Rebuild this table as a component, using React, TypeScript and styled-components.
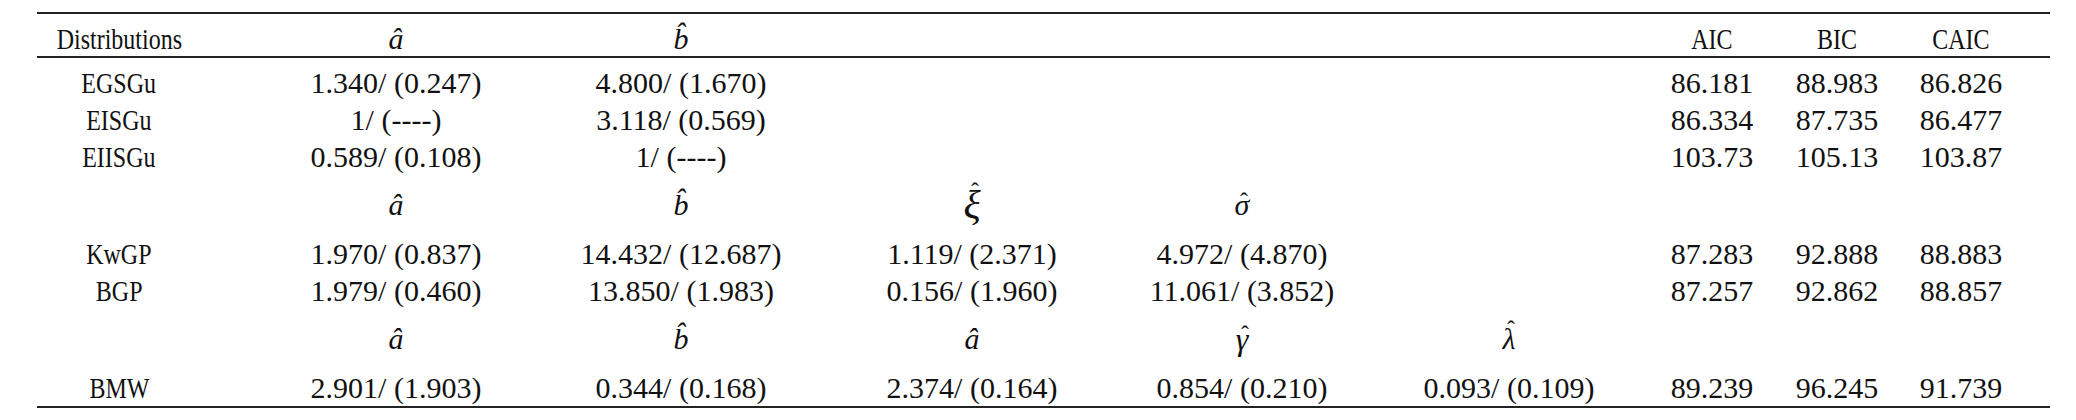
import React from "react";
import styled, { createGlobalStyle } from "styled-components";

const Global = createGlobalStyle`
  html, body { margin: 0; padding: 0; background: #ffffff; }
  body { font-family: "Liberation Serif", "Times New Roman", serif; color: #111111; }
`;

const COLS = "164px 390px 180px 402px 138px 396px 10px 240px 8px";

const Page = styled.div`
  box-sizing: border-box;
  width: 2076px;
  padding: 12px 26px 0 37px;
`;

const Table = styled.div`
  border-top: 2px solid #222222;
  border-bottom: 2px solid #222222;
`;

const Row = styled.div<{ $h: number; $padTop?: number; $rule?: boolean }>`
  display: grid;
  grid-template-columns: ${COLS};
  box-sizing: border-box;
  height: ${(p) => p.$h}px;
  padding-top: ${(p) => p.$padTop ?? 0}px;
  align-items: center;
  border-bottom: ${(p) => (p.$rule ? "2px solid #222222" : "none")};
`;

const Cell = styled.div`
  display: flex;
  justify-content: center;
  white-space: nowrap;
  line-height: 1;
`;

const Label = styled.span`
  display: inline-block;
  font-size: 30px;
  transform: scaleX(0.8);
`;

const Num = styled.span`
  font-size: 30px;
`;

const Sym = styled.span<{ $size?: number }>`
  font-style: italic;
  font-size: ${(p) => p.$size ?? 30}px;
`;

/* Greek letters: the circumflex is drawn over the glyph as a decoration */
const GreekHat = styled.span<{ $size: number; $top: number; $dx: number }>`
  position: relative;
  display: inline-block;
  font-style: italic;
  font-size: ${(p) => p.$size}px;
  line-height: 1;
  &::after {
    content: "ˆ";
    position: absolute;
    left: 50%;
    top: ${(p) => p.$top}px;
    transform: translateX(calc(-50% + ${(p) => p.$dx}px));
    font-style: normal;
    font-size: 24px;
    line-height: 1;
  }
`;

type Val =
  | { kind: "label" | "num"; text: string }
  | { kind: "sym"; text: string; size?: number }
  | { kind: "greek"; text: string; size: number; top: number; dx: number }
  | { kind: "empty" };

const L = (text: string): Val => ({ kind: "label", text });
const N = (text: string): Val => ({ kind: "num", text });
const S = (text: string): Val => ({ kind: "sym", text: text + "\u0302" });
const G = (text: string, size: number, top: number, dx: number): Val => ({
  kind: "greek",
  text,
  size,
  top,
  dx,
});
const E: Val = { kind: "empty" };

const renderVal = (v: Val) => {
  switch (v.kind) {
    case "label":
      return <Label>{v.text}</Label>;
    case "num":
      return <Num>{v.text}</Num>;
    case "sym":
      return <Sym $size={v.size}>{v.text}</Sym>;
    case "greek":
      return (
        <GreekHat $size={v.size} $top={v.top} $dx={v.dx}>
          {v.text}
        </GreekHat>
      );
    default:
      return null;
  }
};

const rows: { cells: Val[]; h: number; padTop?: number; rule?: boolean }[] = [
  {
    h: 44,
    padTop: 8,
    rule: true,
    cells: [L("Distributions"), S("a"), S("b"), E, E, E, L("AIC"), L("BIC"), L("CAIC")],
  },
  {
    h: 43,
    padTop: 6,
    cells: [L("EGSGu"), N("1.340/ (0.247)"), N("4.800/ (1.670)"), E, E, E, N("86.181"), N("88.983"), N("86.826")],
  },
  {
    h: 37,
    cells: [L("EISGu"), N("1/ (----)"), N("3.118/ (0.569)"), E, E, E, N("86.334"), N("87.735"), N("86.477")],
  },
  {
    h: 37,
    cells: [L("EIISGu"), N("0.589/ (0.108)"), N("1/ (----)"), E, E, E, N("103.73"), N("105.13"), N("103.87")],
  },
  {
    h: 60,
    cells: [E, S("a"), S("b"), G("ξ", 40, -6, 3), G("σ", 30, -1, 2), E, E, E, E],
  },
  {
    h: 37,
    cells: [
      L("KwGP"),
      N("1.970/ (0.837)"),
      N("14.432/ (12.687)"),
      N("1.119/ (2.371)"),
      N("4.972/ (4.870)"),
      E,
      N("87.283"),
      N("92.888"),
      N("88.883"),
    ],
  },
  {
    h: 37,
    cells: [
      L("BGP"),
      N("1.979/ (0.460)"),
      N("13.850/ (1.983)"),
      N("0.156/ (1.960)"),
      N("11.061/ (3.852)"),
      E,
      N("87.257"),
      N("92.862"),
      N("88.857"),
    ],
  },
  {
    h: 60,
    cells: [E, S("a"), S("b"), S("a"), G("γ", 32, -1, 3), G("λ", 30, -7, 2), E, E, E],
  },
  {
    h: 37,
    cells: [
      L("BMW"),
      N("2.901/ (1.903)"),
      N("0.344/ (0.168)"),
      N("2.374/ (0.164)"),
      N("0.854/ (0.210)"),
      N("0.093/ (0.109)"),
      N("89.239"),
      N("96.245"),
      N("91.739"),
    ],
  },
];

export default function App() {
  return (
    <>
      <Global />
      <Page>
        <Table>
          {rows.map((r, i) => (
            <Row key={i} $h={r.h} $padTop={r.padTop} $rule={r.rule}>
              {r.cells.map((c, j) => (
                <Cell key={j}>{renderVal(c)}</Cell>
              ))}
            </Row>
          ))}
        </Table>
      </Page>
    </>
  );
}
